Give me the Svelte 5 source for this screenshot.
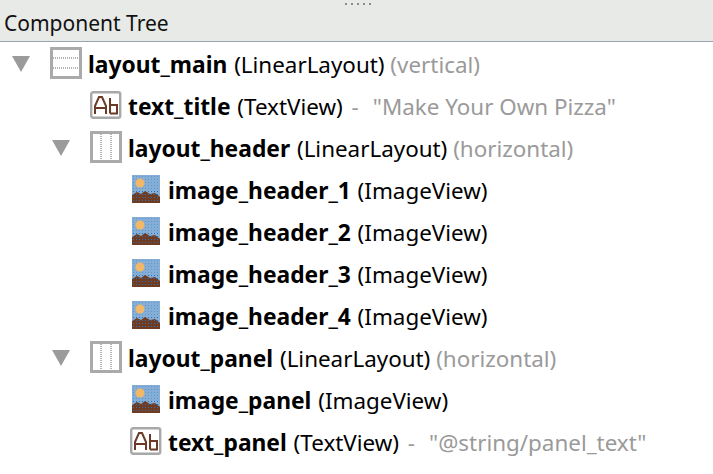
<script lang="ts">
  type Node = {
    depth: number;
    icon: "vertical" | "horizontal" | "text" | "image";
    name: string;
    type: string;
    hint?: string;
    value?: string;
    open?: boolean;
  };

  const nodes: Node[] = [
    { depth: 0, icon: "vertical", name: "layout_main", type: "(LinearLayout)", hint: "(vertical)", open: true },
    { depth: 1, icon: "text", name: "text_title", type: "(TextView)", value: '"Make Your Own Pizza"' },
    { depth: 1, icon: "horizontal", name: "layout_header", type: "(LinearLayout)", hint: "(horizontal)", open: true },
    { depth: 2, icon: "image", name: "image_header_1", type: "(ImageView)" },
    { depth: 2, icon: "image", name: "image_header_2", type: "(ImageView)" },
    { depth: 2, icon: "image", name: "image_header_3", type: "(ImageView)" },
    { depth: 2, icon: "image", name: "image_header_4", type: "(ImageView)" },
    { depth: 1, icon: "horizontal", name: "layout_panel", type: "(LinearLayout)", hint: "(horizontal)", open: true },
    { depth: 2, icon: "image", name: "image_panel", type: "(ImageView)" },
    { depth: 2, icon: "text", name: "text_panel", type: "(TextView)", value: '"@string/panel_text"' }
  ];
</script>

<div class="panel">
  <header class="title-bar">
    <div class="grip">
      {#each [0, 1, 2, 3, 4] as dot (dot)}
        <span></span>
      {/each}
    </div>
    <h1>Component Tree</h1>
  </header>

  <ul class="tree">
    {#each nodes as node (node.name)}
      <li class="row depth-{node.depth}">
        <span class="arrow">
          {#if node.open}
            <svg width="18" height="16" viewBox="0 0 18 16">
              <path d="M0 0H18L9 16Z" fill="#9b9b9b" />
            </svg>
          {/if}
        </span>

        {#if node.icon === "vertical"}
          <svg class="icon" width="32" height="32" viewBox="0 0 32 32">
            <rect x="1.5" y="1.5" width="29" height="29" fill="#fff" stroke="#aaa" stroke-width="3" />
            <path d="M3 11H29M3 21H29" stroke="#b4b4b4" stroke-width="2" stroke-dasharray="1 1" />
          </svg>
        {:else if node.icon === "horizontal"}
          <svg class="icon" width="32" height="32" viewBox="0 0 32 32">
            <rect x="1.5" y="1.5" width="29" height="29" fill="#fff" stroke="#aaa" stroke-width="3" />
            <path d="M11 3V29M21 3V29" stroke="#b4b4b4" stroke-width="2" stroke-dasharray="1 1" />
          </svg>
        {:else if node.icon === "text"}
          <svg class="icon" width="32" height="32" viewBox="0 0 32 32">
            <rect x="1.2" y="3.2" width="29" height="25.6" rx="2" fill="#fff" stroke="#a8a8a8" stroke-width="2.4" />
            <path d="M5 25V17L9 8H12L16 17V25M5 19H16M20 9V24.5M20 16H27V24.5H20" fill="none" stroke="#6b3a26" stroke-width="2" />
          </svg>
        {:else}
          <svg class="icon image" width="28" height="28" viewBox="0 0 28 28">
            <defs>
              <pattern id="dither" width="3" height="3" patternUnits="userSpaceOnUse">
                <rect width="1" height="1" x="1" y="1" fill="#2f6fb5" />
              </pattern>
            </defs>
            <rect width="28" height="28" fill="#84aed6" />
            <rect width="28" height="14" fill="url(#dither)" opacity="0.4" />
            <rect y="14" width="28" height="14" fill="url(#dither)" />
            <circle cx="8" cy="8" r="4.5" fill="#f3b867" />
            <path d="M0 28V20L5 17L9 19L13 16L18 19L23 18L28 22V28Z" fill="#6f3c22" />
            <rect y="17" width="28" height="11" fill="url(#dither)" />
          </svg>
        {/if}

        <span class="label">
          <b>{node.name}</b> {node.type}
          {#if node.hint}<span class="hint">{node.hint}</span>{/if}
          {#if node.value}<span class="hint dash">-<span class="value">{node.value}</span></span>{/if}
        </span>
      </li>
    {/each}
  </ul>
</div>

<style>
  :global(body) {
    background: #fff;
  }

  .panel {
    width: 713px;
    height: 474px;
    overflow: hidden;
    background: #fff;
    font-family: "Noto Sans", "Open Sans", sans-serif;
    color: #000;
  }

  .title-bar {
    position: relative;
    height: 42px;
    box-sizing: border-box;
    padding: 10px 0 0 4px;
    background: #e8eae7;
    border-bottom: 1px solid #9aa7b2;
  }

  .title-bar h1 {
    margin: 0;
    font-size: 21px;
    line-height: 26px;
    font-weight: 400;
    color: #111;
  }

  .grip {
    position: absolute;
    top: 3px;
    left: 345px;
    display: flex;
    gap: 4px;
  }

  .grip span {
    width: 2px;
    height: 2px;
    background: #8c8c8c;
  }

  .tree {
    list-style: none;
    margin: 0;
    padding: 0;
  }

  .row {
    display: flex;
    align-items: center;
    height: 42px;
    white-space: nowrap;
  }

  .depth-0 {
    padding-left: 12px;
  }

  .depth-1 {
    padding-left: 52px;
  }

  .depth-2 {
    padding-left: 92px;
  }

  .arrow {
    flex: none;
    width: 38px;
    display: flex;
    align-items: center;
  }

  .arrow svg {
    display: block;
    margin-top: 2px;
  }

  .icon {
    flex: none;
    display: block;
    margin-right: 6px;
  }

  .icon.image {
    margin-left: 2px;
    margin-right: 8px;
  }

  .label {
    font-size: 22.4px;
    line-height: 28px;
    margin-top: 4px;
  }

  .label b {
    font-weight: 700;
    font-size: 22.8px;
    margin-right: 1px;
  }

  .hint {
    color: #9a9a9a;
  }

  .dash {
    margin-left: 3px;
  }

  .value {
    margin-left: 14px;
  }
</style>
